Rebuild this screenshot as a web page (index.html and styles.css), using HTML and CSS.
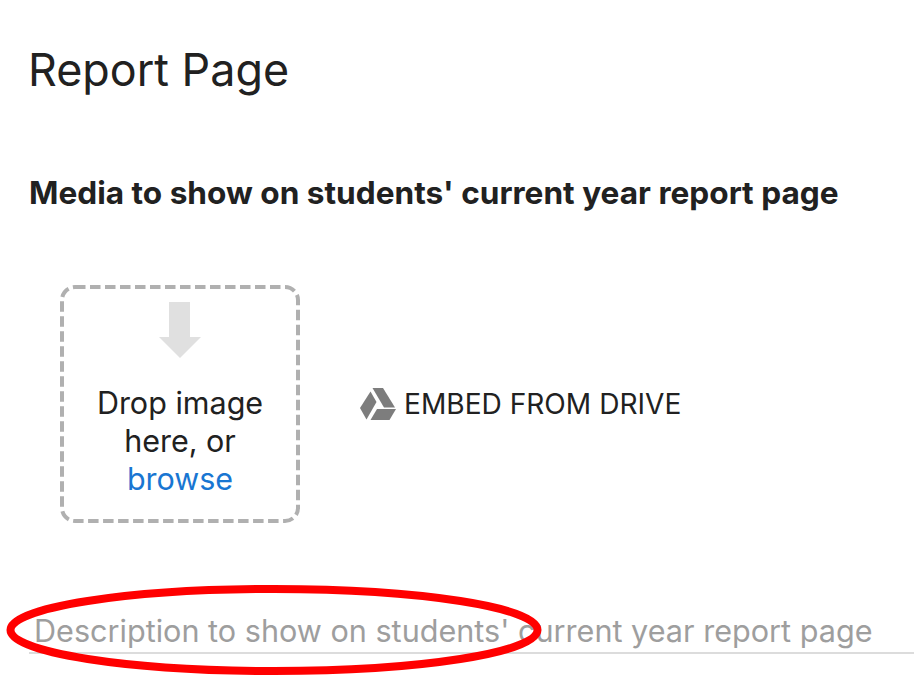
FILE: index.html
```html
<!DOCTYPE html>
<html lang="en">
<head>
    <meta charset="UTF-8">
    <title>Report Page</title>
    <link rel="stylesheet" href="styles.css">
</head>
<body>
    <div class="page">
        <h1 class="title">Report Page</h1>
        <h2 class="subtitle">Media to show on students' current year report page</h2>
        <div class="media-row">
            <div class="dropzone">
                <svg class="drop-border" width="240" height="238" viewBox="0 0 240 238">
                    <rect x="2" y="2" width="236" height="234" rx="13" fill="none" stroke="#b0b0b0" stroke-width="4" stroke-dasharray="10.500 4.500"/>
                </svg>
                <svg class="drop-arrow" width="42" height="56" viewBox="0 0 42 56">
                    <path d="M10 0H31V35H42L21 56L0 35H10Z" fill="#e0e0e0"/>
                </svg>
                <div class="drop-text">Drop image here, or <a class="browse">browse</a></div>
            </div>
            <div class="embed">
                <svg class="drive-icon" width="36" height="32" viewBox="0 0 36 32">
                    <path d="M12.500 0H23L35 19.500H24Z" fill="#7d7d7d"/>
                    <path d="M0 20L10.500 3.500L16.500 14L6.500 31.500Z" fill="#7d7d7d"/>
                    <path d="M10.500 32L17 21H36L29.500 32Z" fill="#7d7d7d"/>
                </svg>
                <span class="embed-label">EMBED FROM DRIVE</span>
            </div>
        </div>
        <div class="description">Description to show on students' current year report page</div>
    </div>
    <svg class="annotation" width="560" height="110" viewBox="0 0 560 110">
        <ellipse cx="274" cy="60" rx="263.500" ry="41" fill="none" stroke="#ff0000" stroke-width="8"/>
    </svg>
</body>
</html>
```

FILE: styles.css
```css
* {
    margin: 0;
    padding: 0;
    box-sizing: border-box;
}

body {
    background-color: white;
    font-family: Inter, "Liberation Sans", sans-serif;
    color: #212121;
    height: 692px;
    overflow: hidden;
    position: relative;
}

.page {
    padding: 41px 0 0 29px;
}

.title {
    font-size: 44.850px;
    font-weight: 400;
    line-height: 58px;
    margin-left: -1px;
}

.subtitle {
    font-size: 31.600px;
    font-weight: 700;
    line-height: 38px;
    margin-top: 75px;
    white-space: nowrap;
}

.media-row {
    display: flex;
    align-items: center;
    margin-top: 73px;
    padding-left: 31px;
}

.dropzone {
    width: 240px;
    height: 238px;
    border-radius: 14px;
    display: flex;
    flex-direction: column;
    align-items: center;
    padding-top: 17px;
    position: relative;
}

.drop-border {
    position: absolute;
    left: 0;
    top: 0;
}

.drop-arrow {
    display: block;
}

.drop-text {
    font-size: 30.500px;
    line-height: 38px;
    text-align: center;
    margin-top: 26px;
    width: 190px;
}

.browse {
    color: #1976d2;
}

.embed {
    display: flex;
    align-items: center;
    margin-left: 60px;
}

.drive-icon {
    display: block;
    margin-right: 8px;
}

.embed-label {
    font-size: 28.100px;
    line-height: 32px;
    white-space: nowrap;
}

.description {
    font-size: 30.600px;
    line-height: 40px;
    color: #9e9e9e;
    margin-top: 88px;
    padding: 0 0 1px 5px;
    border-bottom: 2px solid #dcdcdc;
    white-space: nowrap;
}

.annotation {
    position: absolute;
    left: 0;
    top: 570px;
}
```
